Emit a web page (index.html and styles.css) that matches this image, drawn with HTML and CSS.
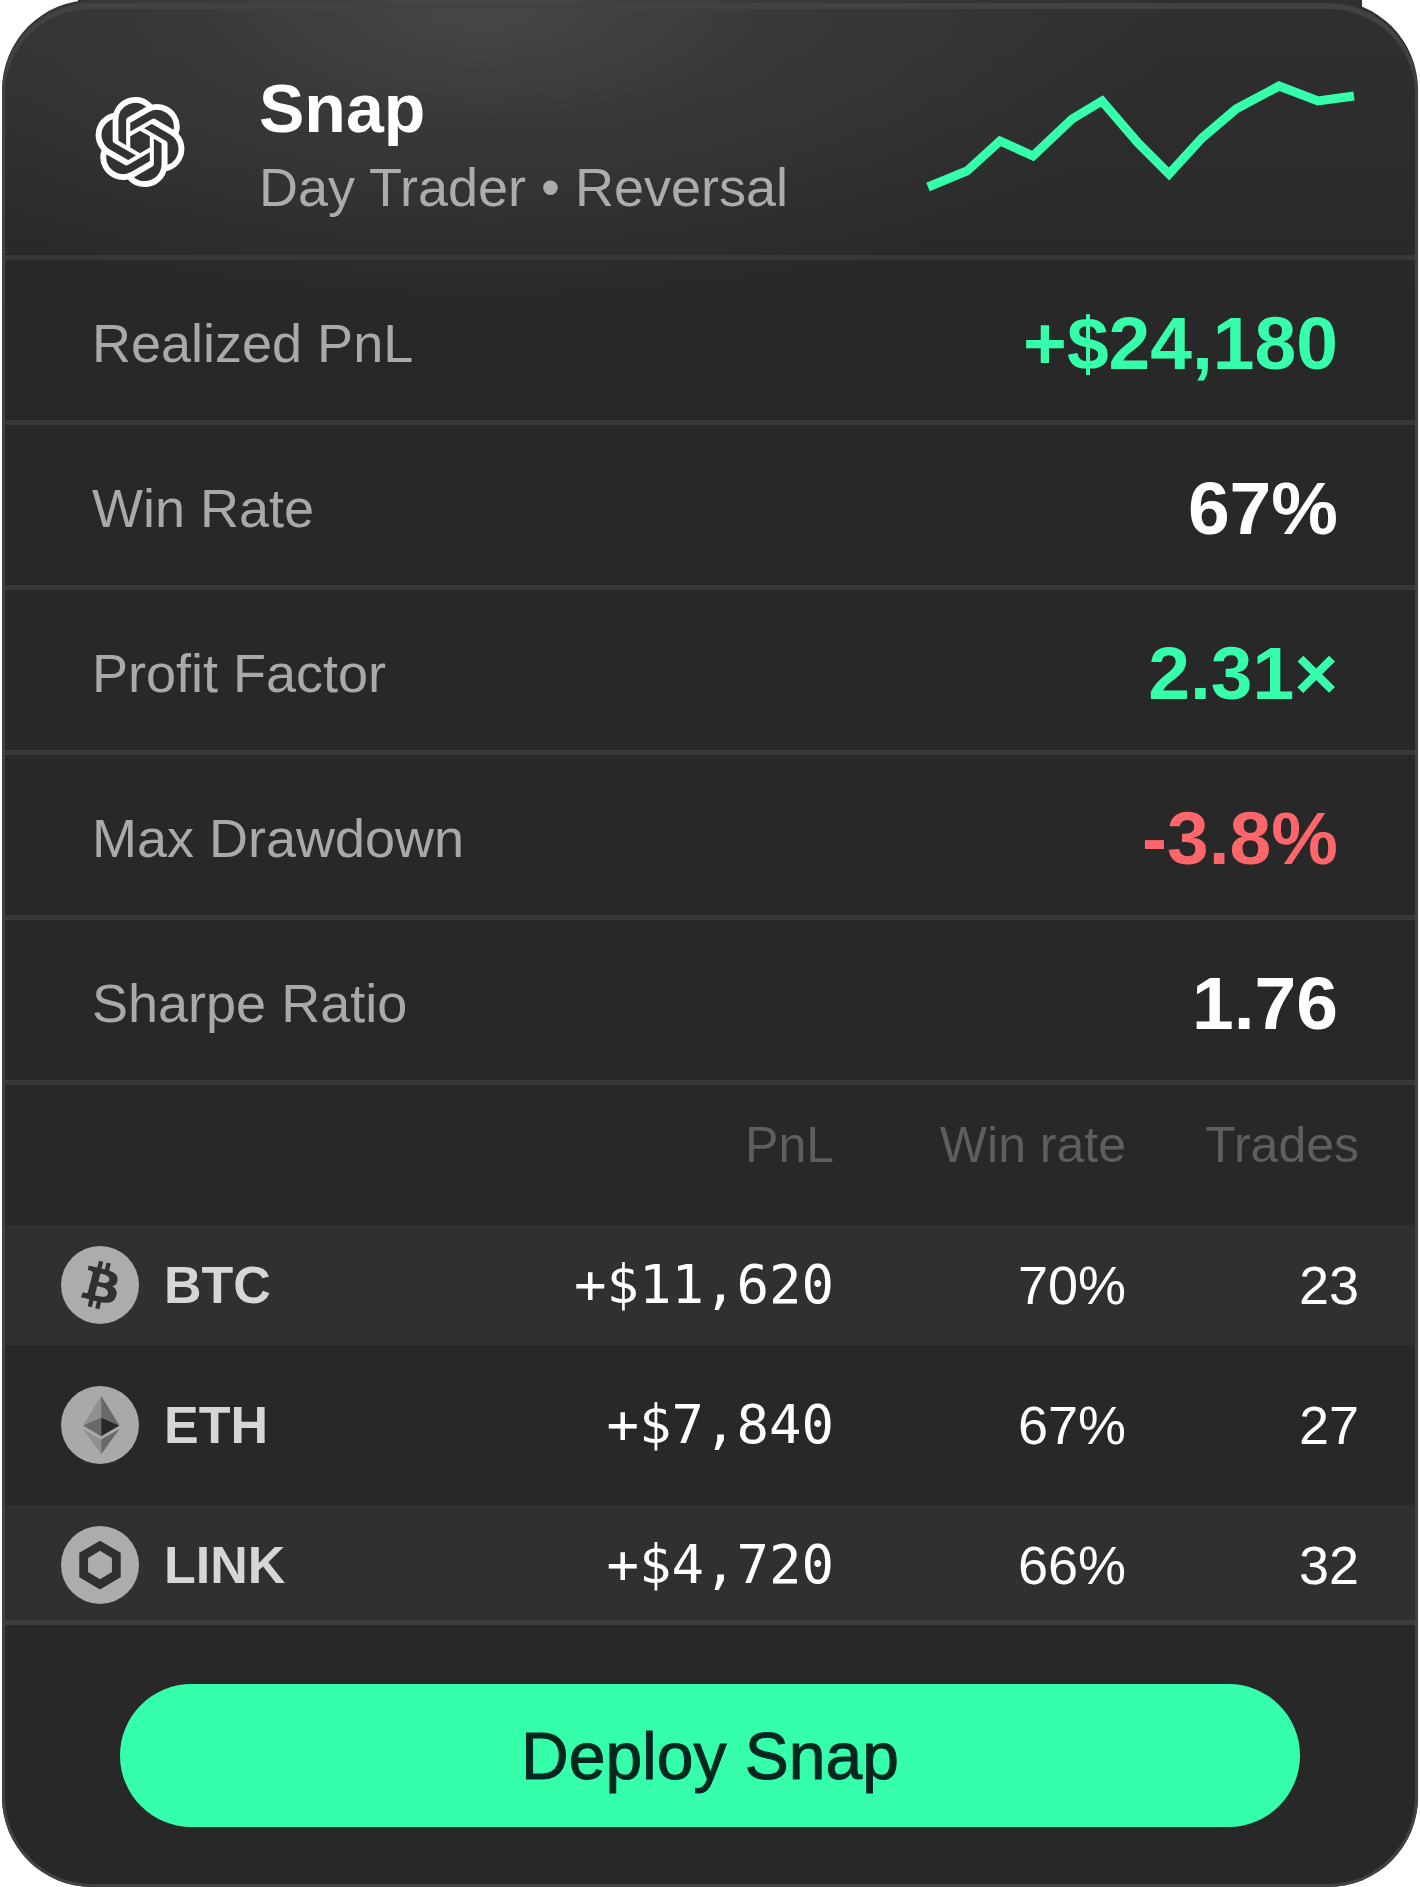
FILE: index.html
```html
<!DOCTYPE html>
<html lang="en">
<head>
  <meta charset="UTF-8">
  <meta name="viewport" content="width=device-width, initial-scale=1.0">
  <title>Snap - Day Trader</title>
  <link rel="stylesheet" href="styles.css">
</head>
<body>
  <main class="card">
    <header class="card-header">
      <svg class="logo" viewBox="0 0 24 24" role="img" aria-label="OpenAI">
        <path fill="currentColor" d="M22.2819 9.8211a5.9847 5.9847 0 0 0-.5157-4.9108 6.0462 6.0462 0 0 0-6.5098-2.9A6.0651 6.0651 0 0 0 4.9807 4.1818a5.9847 5.9847 0 0 0-3.9977 2.9 6.0462 6.0462 0 0 0 .7427 7.0966 5.98 5.98 0 0 0 .511 4.9107 6.051 6.051 0 0 0 6.5146 2.9001A5.9847 5.9847 0 0 0 13.2599 24a6.0557 6.0557 0 0 0 5.7718-4.2058 5.9894 5.9894 0 0 0 3.9977-2.9001 6.0557 6.0557 0 0 0-.7475-7.0729zm-9.022 12.6081a4.4755 4.4755 0 0 1-2.8764-1.0408l.1419-.0804 4.7783-2.7582a.7948.7948 0 0 0 .3927-.6813v-6.7369l2.02 1.1686a.071.071 0 0 1 .038.052v5.5826a4.504 4.504 0 0 1-4.4945 4.4944zm-9.6607-4.1254a4.4708 4.4708 0 0 1-.5346-3.0137l.142.0852 4.783 2.7582a.7712.7712 0 0 0 .7806 0l5.8428-3.3685v2.3324a.0804.0804 0 0 1-.0332.0615L9.74 19.9502a4.4992 4.4992 0 0 1-6.1408-1.6464zM2.3408 7.8956a4.485 4.485 0 0 1 2.3655-1.9728V11.6a.7664.7664 0 0 0 .3879.6765l5.8144 3.3543-2.0201 1.1685a.0757.0757 0 0 1-.071 0l-4.8303-2.7865A4.504 4.504 0 0 1 2.3408 7.872zm16.5963 3.8558L13.1038 8.364 15.1192 7.2a.0757.0757 0 0 1 .071 0l4.8303 2.7913a4.4944 4.4944 0 0 1-.6765 8.1042v-5.6772a.79.79 0 0 0-.407-.667zm2.0107-3.0231l-.142-.0852-4.7735-2.7818a.7759.7759 0 0 0-.7854 0L9.409 9.2297V6.8974a.0662.0662 0 0 1 .0284-.0615l4.8303-2.7866a4.4992 4.4992 0 0 1 6.6802 4.66zM8.3065 12.863l-2.02-1.1638a.0804.0804 0 0 1-.038-.0567V6.0742a4.4992 4.4992 0 0 1 7.3757-3.4537l-.142.0805L8.704 5.459a.7948.7948 0 0 0-.3927.6813zm1.0976-2.3654l2.602-1.4998 2.6069 1.4998v2.9994l-2.5974 1.4997-2.6067-1.4997Z"/>
      </svg>
      <div class="agent">
        <h1>Snap</h1>
        <p>Day Trader • Reversal</p>
      </div>
      <svg class="sparkline" viewBox="0 0 432 136" aria-hidden="true">
        <polyline fill="none" stroke="currentColor" stroke-width="9" points="4,113 43,97 76,67 109,82 148,45 178,27 214,69 245,100 278,64 312,35 355,12 394,27 430,22"/>
      </svg>
    </header>

    <dl class="stats">
      <div class="stat"><dt>Realized PnL</dt><dd class="up">+$24,180</dd></div>
      <div class="stat"><dt>Win Rate</dt><dd>67%</dd></div>
      <div class="stat"><dt>Profit Factor</dt><dd class="up">2.31×</dd></div>
      <div class="stat"><dt>Max Drawdown</dt><dd class="down">-3.8%</dd></div>
      <div class="stat"><dt>Sharpe Ratio</dt><dd>1.76</dd></div>
    </dl>

    <table class="assets">
      <thead>
        <tr>
          <td class="col-asset"></td>
          <th scope="col">PnL</th>
          <th scope="col" class="col-num">Win rate</th>
          <th scope="col" class="col-num">Trades</th>
        </tr>
      </thead>
      <tbody>
        <tr>
          <th scope="row">
            <div class="asset">
              <svg class="coin" viewBox="0 0 32 32" aria-hidden="true">
                <circle cx="16" cy="16" r="16" fill="#acacac"/>
                <path fill="#303030" d="M23.189 14.02c.314-2.096-1.283-3.223-3.465-3.975l.708-2.84-1.728-.43-.69 2.765c-.454-.114-.92-.22-1.385-.326l.695-2.783L15.596 6l-.708 2.839c-.376-.086-.746-.17-1.104-.26l.002-.009-2.384-.595-.46 1.846s1.283.294 1.256.312c.7.175.826.638.805 1.006l-.806 3.235c.048.012.11.03.18.057l-.183-.045-1.13 4.532c-.086.212-.303.531-.793.41.018.025-1.256-.313-1.256-.313l-.858 1.978 2.25.561c.418.105.828.215 1.231.318l-.715 2.872 1.727.43.708-2.84c.472.127.93.245 1.378.357l-.706 2.828 1.728.43.715-2.866c2.948.558 5.164.333 6.097-2.333.752-2.146-.037-3.385-1.588-4.192 1.13-.26 1.98-1.003 2.207-2.538zm-3.95 5.538c-.533 2.147-4.148.986-5.32.695l.95-3.805c1.172.293 4.929.872 4.37 3.11zm.535-5.569c-.487 1.953-3.495.96-4.47.717l.86-3.45c.975.243 4.118.696 3.61 2.733z"/>
              </svg>
              BTC
            </div>
          </th>
          <td class="pnl">+$11,620</td>
          <td>70%</td>
          <td>23</td>
        </tr>
        <tr>
          <th scope="row">
            <div class="asset">
              <svg class="coin" viewBox="0 0 32 32" aria-hidden="true">
                <circle cx="16" cy="16" r="16" fill="#a9a9a9"/>
                <path fill="#909090" d="M16.498 4L9 16.22l7.498-3.35zM16.498 27.995v-6.028L9 17.616z"/>
                <path fill="#696969" d="M16.498 4v8.87l7.497 3.35zM16.498 21.968v6.027L24 17.616zM9 16.22l7.498 4.353v-7.701z"/>
                <path fill="#282828" d="M16.498 20.573l7.497-4.353-7.497-3.348z"/>
              </svg>
              ETH
            </div>
          </th>
          <td class="pnl">+$7,840</td>
          <td>67%</td>
          <td>27</td>
        </tr>
        <tr>
          <th scope="row">
            <div class="asset">
              <svg class="coin" viewBox="0 0 32 32" aria-hidden="true">
                <circle cx="16" cy="16" r="16" fill="#acacac"/>
                <path fill="#303030" fill-rule="evenodd" d="M16 6.1l8.5 4.9v10L16 26l-8.5-5V11zM16 10.2l-4.9 2.9v5.8l4.9 2.9 4.9-2.9v-5.8z"/>
              </svg>
              LINK
            </div>
          </th>
          <td class="pnl">+$4,720</td>
          <td>66%</td>
          <td>32</td>
        </tr>
      </tbody>
    </table>

    <footer class="card-footer">
      <button type="button" class="deploy">Deploy Snap</button>
    </footer>
  </main>
</body>
</html>
```
FILE: styles.css
```css
:root {
  --bg: #282828;
  --stripe: #303030;
  --line: #383838;
  --edge: #424242;
  --green: #36ffac;
  --red: #ff666b;
  --muted: #a9a9a9;
  --dim: #5e5e5e;
}

* {
  box-sizing: border-box;
}

body {
  margin: 0;
  padding: 0 2px;
  background-color: white;
  font-family: "Liberation Sans", Arial, sans-serif;
  font-size: 54px;
  line-height: 60px;
  color: white;
}

h1, p, dl, dd {
  margin: 0;
}

.card {
  position: relative;
  background:
    radial-gradient(ellipse 700px 310px at 34% 0, #484848, rgba(64, 64, 64, .6) 40%, transparent),
    linear-gradient(#303030, var(--bg) 300px);
  border-radius: 90px;
}

.card::before {
  content: "";
  position: absolute;
  z-index: -1;
  top: 0;
  left: 76px;
  right: 56px;
  height: 12px;
  background-color: #303030;
}

/* rim, drawn over the striped rows */
.card::after {
  content: "";
  position: absolute;
  inset: 3px 0 0;
  border: 3px solid var(--edge);
  border-top-width: 6px;
  border-radius: 90px;
  pointer-events: none;
}

.card-header {
  display: flex;
  align-items: center;
  height: 260px;
  padding: 28px 62px 0 93px;
  border-bottom: 5px solid var(--line);
}

.logo {
  width: 90px;
  height: 90px;
}

.agent {
  flex: 1;
  margin-left: 74px;
  padding-top: 10px;
}

.agent h1 {
  font-size: 68px;
  line-height: 80px;
}

.agent p {
  line-height: 78px;
  color: #acacac;
}

.sparkline {
  width: 432px;
  height: 136px;
  color: var(--green);
}

.stat {
  display: flex;
  justify-content: space-between;
  align-items: center;
  height: 165px;
  padding: 6px 80px 0 90px;
  border-bottom: 5px solid var(--line);
}

.stat dt {
  color: var(--muted);
}

.stat dd {
  font-size: 75px;
  font-weight: bold;
}

.stat .up {
  color: var(--green);
}

.stat .down {
  color: var(--red);
}

.assets {
  width: 100%;
  table-layout: fixed;
  border-collapse: separate;
  border-spacing: 0;
  border-bottom: 5px solid #3e3e3e;
}

.assets th, .assets td {
  padding: 0;
  text-align: right;
}

.assets th:last-child, .assets td:last-child {
  padding-right: 59px;
}

.assets thead tr {
  height: 140px;
}

.assets thead th {
  padding-bottom: 20px;
  font-size: 50px;
  font-weight: normal;
  color: var(--dim);
}

.col-asset {
  width: 24%;
}

.assets .col-num {
  width: 292px;
}

.assets tbody tr {
  height: 120px;
}

.assets tbody tr:nth-child(even) {
  height: 160px;
}

.assets tbody tr:nth-child(odd) {
  background-color: var(--stripe);
}

.assets tbody tr:last-child {
  height: 115px;
}

.assets tbody tr:last-child > * {
  padding-top: 5px;
}

.asset {
  display: flex;
  align-items: center;
  gap: 25px;
  padding-left: 59px;
  font-size: 52px;
  color: #d6d6d6;
}

.coin {
  width: 78px;
  height: 78px;
}

.assets .pnl {
  font-family: "DejaVu Sans Mono", "Liberation Mono", monospace;
}

.card-footer {
  padding: 59px 118px 60px;
}

.deploy {
  display: block;
  width: 100%;
  height: 143px;
  border: none;
  border-radius: 72px;
  background-color: var(--green);
  color: #03261f;
  font-family: inherit;
  font-size: 66px;
  -webkit-text-stroke: 1px currentColor;
  cursor: pointer;
}
```
